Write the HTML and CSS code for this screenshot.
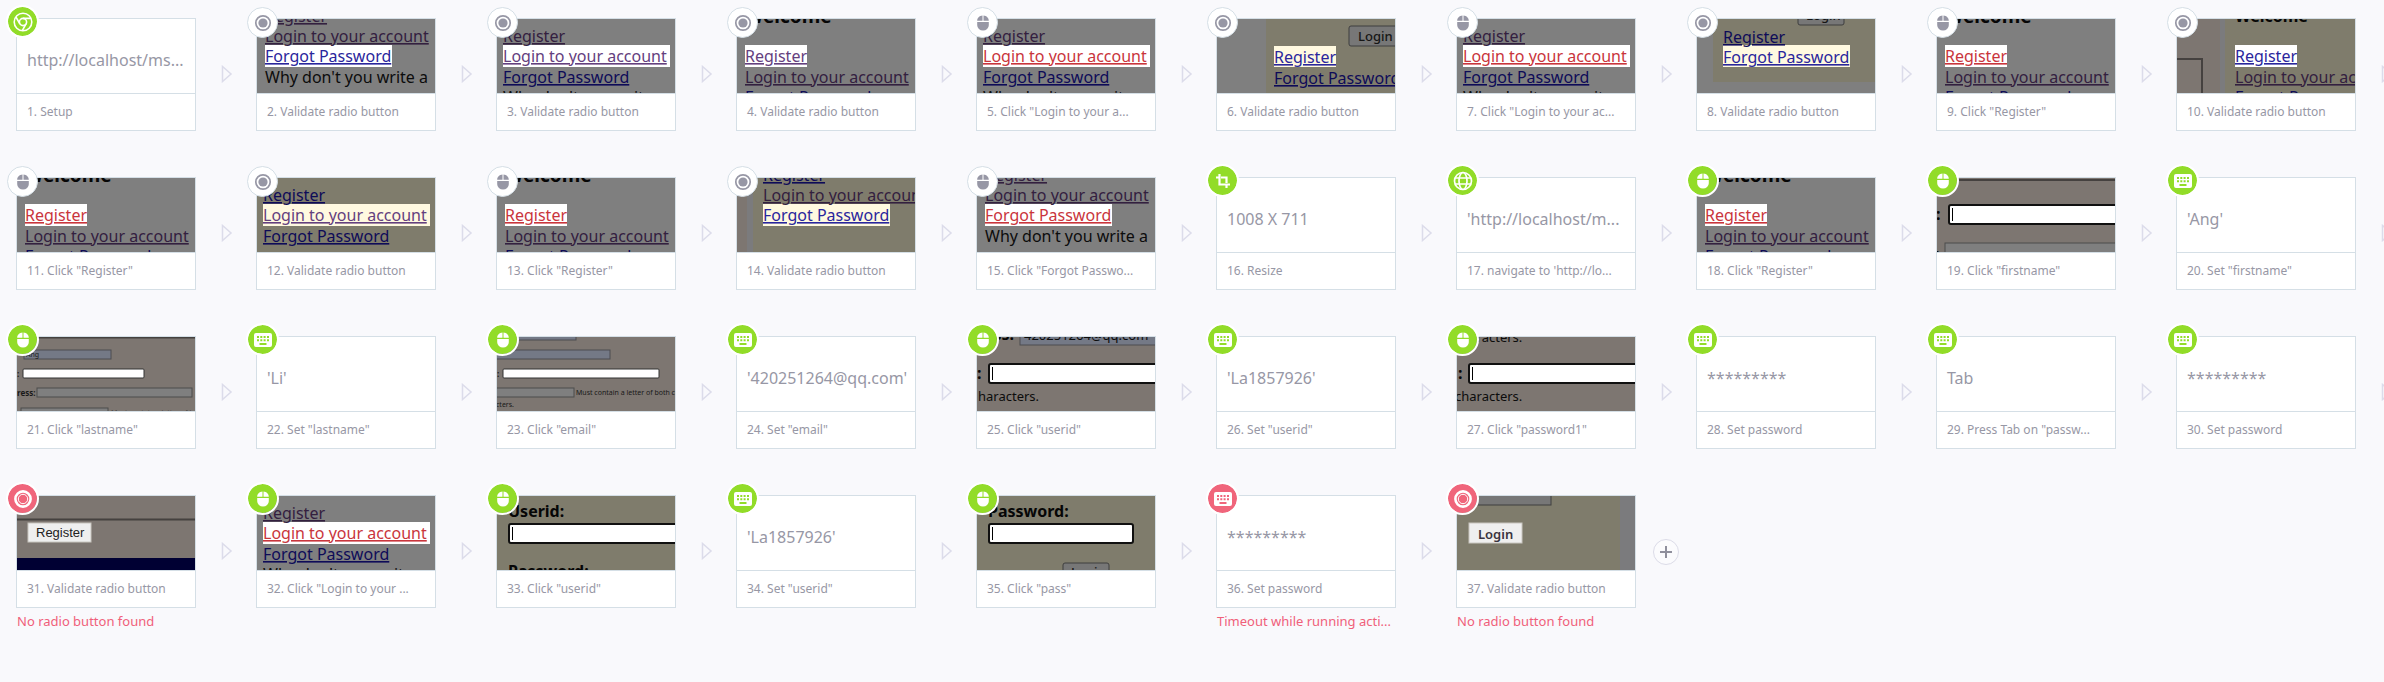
FILE: index.html
```html
<!DOCTYPE html>
<html lang="en">
<head>
<meta charset="utf-8">
<title>Test steps</title>
<link rel="stylesheet" href="styles.css">
</head>
<body>
<svg class="defs" aria-hidden="true">
  <symbol id="i-radio" viewBox="0 0 20 20"><circle cx="10" cy="10" r="7.2" fill="none" stroke="currentColor" stroke-width="1.7"/><circle cx="10" cy="10" r="4.6" fill="currentColor"/></symbol>
  <symbol id="i-ring" viewBox="0 0 20 20"><circle cx="10" cy="10" r="7.6" fill="none" stroke="currentColor" stroke-width="2.6"/><circle cx="10" cy="10" r="4.7" fill="none" stroke="currentColor" stroke-width="1"/></symbol>
  <symbol id="i-mouse" viewBox="0 0 20 20"><path fill="currentColor" d="M9.500 2.600v5.200H4.200C4.200 5 6.300 2.800 9.500 2.600zM10.500 2.600v5.200h5.300C15.800 5 13.700 2.800 10.500 2.600zM4.200 8.900h11.600v3.300a5.800 5.400 0 0 1-11.600 0z"/></symbol>
  <symbol id="i-key" viewBox="0 0 20 20"><path fill="currentColor" fill-rule="evenodd" d="M3 3h14a2 2 0 0 1 2 2v10a2 2 0 0 1-2 2H3a2 2 0 0 1-2-2V5a2 2 0 0 1 2-2zM4 6v2h2V6zM7.300 6v2h2V6zM10.600 6v2h2V6zM14 6v2h2V6zM4 9.200v2h2v-2zM7.300 9.200v2h2v-2zM10.600 9.200v2h2v-2zM14 9.200v2h2v-2zM6.500 13v2h7v-2z"/></symbol>
  <symbol id="i-crop" viewBox="0 0 20 20"><path fill="none" stroke="currentColor" stroke-width="2.200" d="M3 6.500h2.500M8 6.500h5.500V12M6.500 3v10.500H17M13.500 13v4"/></symbol>
  <symbol id="i-globe" viewBox="0 0 20 20"><g fill="none" stroke="currentColor" stroke-width="1.700"><circle cx="10" cy="10" r="8.500"/><ellipse cx="10" cy="10" rx="4" ry="8.500"/><path d="M2 7h16M2 13h16"/></g></symbol>
  <symbol id="i-chrome" viewBox="0 0 20 20"><g fill="none" stroke="currentColor" stroke-width="1.600"><circle cx="10" cy="10" r="8.800"/><circle cx="10" cy="10" r="3.600"/><path d="M10 6.400h7.900M6.900 11.800L2.900 5M13.100 11.800l-4 7"/></g></symbol>
</svg>
<main class="steps">

<article class="step"><div class="card"><div class="view value">http://localhost/ms...</div><p class="caption">1. Setup</p><span class="badge ok"><svg><use href="#i-chrome"/></svg></span></div><span class="arrow"><svg viewBox="0 0 12 18"><path d="M1.500 1.500v15l8.500-7.500z"/></svg></span></article>

<article class="step"><div class="card"><svg class="view grey" viewBox="0 0 178 74"><rect class="white" x="8" y="26" width="127" height="22"/><text class="link dim-p" x="8" y="3">Register</text><text class="link dim-p" x="8" y="23">Login to your account</text><text class="link blue" x="8" y="43">Forgot Password</text><text class="plain" x="8" y="64">Why don't you write a</text></svg><p class="caption">2. Validate radio button</p><span class="badge"><svg><use href="#i-radio"/></svg></span></div><span class="arrow"><svg viewBox="0 0 12 18"><path d="M1.500 1.500v15l8.500-7.500z"/></svg></span></article>

<article class="step"><div class="card"><svg class="view grey" viewBox="0 0 178 74"><rect class="white" x="6" y="26" width="167" height="22"/><text class="link dim-p" x="6" y="23">Register</text><text class="link purple" x="6" y="43">Login to your account</text><text class="link dim-b" x="6" y="64">Forgot Password</text><text class="plain" x="6" y="84">Why don't you write a</text></svg><p class="caption">3. Validate radio button</p><span class="badge"><svg><use href="#i-radio"/></svg></span></div><span class="arrow"><svg viewBox="0 0 12 18"><path d="M1.500 1.500v15l8.500-7.500z"/></svg></span></article>

<article class="step"><div class="card"><svg class="view grey" viewBox="0 0 178 74"><rect class="white" x="8" y="26" width="62" height="22"/><text class="title" x="8" y="4">Welcome</text><text class="link purple" x="8" y="43">Register</text><text class="link dim-p" x="8" y="64">Login to your account</text><text class="link dim-b" x="8" y="84">Forgot Password</text></svg><p class="caption">4. Validate radio button</p><span class="badge"><svg><use href="#i-radio"/></svg></span></div><span class="arrow"><svg viewBox="0 0 12 18"><path d="M1.500 1.500v15l8.500-7.500z"/></svg></span></article>

<article class="step"><div class="card"><svg class="view grey" viewBox="0 0 178 74"><rect class="white" x="6" y="26" width="167" height="22"/><text class="link dim-p" x="6" y="23">Register</text><text class="link red" x="6" y="43">Login to your account</text><text class="link dim-b" x="6" y="64">Forgot Password</text><text class="plain" x="6" y="84">Why don't you write a</text></svg><p class="caption">5. Click "Login to your a...</p><span class="badge"><svg><use href="#i-mouse"/></svg></span></div><span class="arrow"><svg viewBox="0 0 12 18"><path d="M1.500 1.500v15l8.500-7.500z"/></svg></span></article>

<article class="step"><div class="card"><svg class="view grey" viewBox="0 0 178 74"><rect class="olive-fill" x="49" y="0" width="129" height="74"/><rect class="dim-btn" x="132" y="7" width="60" height="20" rx="2"/><text class="btn-text" x="141" y="22">Login</text><rect class="cream" x="57" y="27" width="62" height="21"/><text class="link blue" x="57" y="44">Register</text><text class="link dim-b" x="57" y="65">Forgot Password</text></svg><p class="caption">6. Validate radio button</p><span class="badge"><svg><use href="#i-radio"/></svg></span></div><span class="arrow"><svg viewBox="0 0 12 18"><path d="M1.500 1.500v15l8.500-7.500z"/></svg></span></article>

<article class="step"><div class="card"><svg class="view grey" viewBox="0 0 178 74"><rect class="white" x="6" y="26" width="167" height="22"/><text class="link dim-p" x="6" y="23">Register</text><text class="link red" x="6" y="43">Login to your account</text><text class="link dim-b" x="6" y="64">Forgot Password</text><text class="plain" x="6" y="84">Why don't you write a</text></svg><p class="caption">7. Click "Login to your ac...</p><span class="badge"><svg><use href="#i-mouse"/></svg></span></div><span class="arrow"><svg viewBox="0 0 12 18"><path d="M1.500 1.500v15l8.500-7.500z"/></svg></span></article>

<article class="step"><div class="card"><svg class="view grey" viewBox="0 0 178 74"><rect class="olive-fill" x="16" y="0" width="162" height="63"/><rect class="dim-btn" x="101" y="-14" width="46" height="20" rx="2"/><text class="btn-text" x="109" y="1">Login</text><rect class="cream" x="26" y="26" width="127" height="22"/><text class="link dim-b" x="26" y="24">Register</text><text class="link blue" x="26" y="44">Forgot Password</text></svg><p class="caption">8. Validate radio button</p><span class="badge"><svg><use href="#i-radio"/></svg></span></div><span class="arrow"><svg viewBox="0 0 12 18"><path d="M1.500 1.500v15l8.500-7.500z"/></svg></span></article>

<article class="step"><div class="card"><svg class="view grey" viewBox="0 0 178 74"><rect class="white" x="8" y="26" width="62" height="22"/><text class="title" x="8" y="4">Welcome</text><text class="link red" x="8" y="43">Register</text><text class="link dim-p" x="8" y="64">Login to your account</text><text class="link dim-b" x="8" y="84">Forgot Password</text></svg><p class="caption">9. Click "Register"</p><span class="badge"><svg><use href="#i-mouse"/></svg></span></div><span class="arrow"><svg viewBox="0 0 12 18"><path d="M1.500 1.500v15l8.500-7.500z"/></svg></span></article>

<article class="step"><div class="card"><svg class="view brown" viewBox="0 0 178 74"><rect class="grey-fill" x="43" y="0" width="5" height="74"/><rect class="olive-fill" x="48" y="0" width="130" height="74"/><path class="rule" d="M0 40h25v34"/><text class="title small" x="58" y="3">Welcome</text><rect class="white" x="58" y="26" width="62" height="22"/><text class="link blue" x="58" y="43">Register</text><text class="link dim-p" x="58" y="64">Login to your account</text><text class="link dim-b" x="58" y="84">Forgot Password</text></svg><p class="caption">10. Validate radio button</p><span class="badge"><svg><use href="#i-radio"/></svg></span></div><span class="arrow"><svg viewBox="0 0 12 18"><path d="M1.500 1.500v15l8.500-7.500z"/></svg></span></article>

<article class="step"><div class="card"><svg class="view grey" viewBox="0 0 178 74"><rect class="white" x="8" y="26" width="62" height="22"/><text class="title" x="8" y="4">Welcome</text><text class="link red" x="8" y="43">Register</text><text class="link dim-p" x="8" y="64">Login to your account</text><text class="link dim-b" x="8" y="84">Forgot Password</text></svg><p class="caption">11. Click "Register"</p><span class="badge"><svg><use href="#i-mouse"/></svg></span></div><span class="arrow"><svg viewBox="0 0 12 18"><path d="M1.500 1.500v15l8.500-7.500z"/></svg></span></article>

<article class="step"><div class="card"><svg class="view olive" viewBox="0 0 178 74"><rect class="cream" x="6" y="26" width="167" height="22"/><text class="link dim-b" x="6" y="23">Register</text><text class="link purple" x="6" y="43">Login to your account</text><text class="link dim-b" x="6" y="64">Forgot Password</text></svg><p class="caption">12. Validate radio button</p><span class="badge"><svg><use href="#i-radio"/></svg></span></div><span class="arrow"><svg viewBox="0 0 12 18"><path d="M1.500 1.500v15l8.500-7.500z"/></svg></span></article>

<article class="step"><div class="card"><svg class="view grey" viewBox="0 0 178 74"><rect class="white" x="8" y="26" width="62" height="22"/><text class="title" x="8" y="4">Welcome</text><text class="link red" x="8" y="43">Register</text><text class="link dim-p" x="8" y="64">Login to your account</text><text class="link dim-b" x="8" y="84">Forgot Password</text></svg><p class="caption">13. Click "Register"</p><span class="badge"><svg><use href="#i-mouse"/></svg></span></div><span class="arrow"><svg viewBox="0 0 12 18"><path d="M1.500 1.500v15l8.500-7.500z"/></svg></span></article>

<article class="step"><div class="card"><svg class="view olive" viewBox="0 0 178 74"><rect class="brown-fill" x="0" y="0" width="10" height="74"/><rect class="grey-fill" x="10" y="0" width="6" height="74"/><rect class="cream" x="26" y="26" width="127" height="22"/><text class="link dim-b" x="26" y="3">Register</text><text class="link dim-p" x="26" y="23">Login to your account</text><text class="link blue" x="26" y="43">Forgot Password</text></svg><p class="caption">14. Validate radio button</p><span class="badge"><svg><use href="#i-radio"/></svg></span></div><span class="arrow"><svg viewBox="0 0 12 18"><path d="M1.500 1.500v15l8.500-7.500z"/></svg></span></article>

<article class="step"><div class="card"><svg class="view grey" viewBox="0 0 178 74"><rect class="white" x="8" y="26" width="127" height="22"/><text class="link dim-p" x="8" y="3">Register</text><text class="link dim-p" x="8" y="23">Login to your account</text><text class="link red" x="8" y="43">Forgot Password</text><text class="plain" x="8" y="64">Why don't you write a</text></svg><p class="caption">15. Click "Forgot Passwo...</p><span class="badge"><svg><use href="#i-mouse"/></svg></span></div><span class="arrow"><svg viewBox="0 0 12 18"><path d="M1.500 1.500v15l8.500-7.500z"/></svg></span></article>

<article class="step"><div class="card"><div class="view value">1008 X 711</div><p class="caption">16. Resize</p><span class="badge ok"><svg><use href="#i-crop"/></svg></span></div><span class="arrow"><svg viewBox="0 0 12 18"><path d="M1.500 1.500v15l8.500-7.500z"/></svg></span></article>

<article class="step"><div class="card"><div class="view value">'http://localhost/m...</div><p class="caption">17. navigate to 'http://lo...</p><span class="badge ok"><svg><use href="#i-globe"/></svg></span></div><span class="arrow"><svg viewBox="0 0 12 18"><path d="M1.500 1.500v15l8.500-7.500z"/></svg></span></article>

<article class="step"><div class="card"><svg class="view grey" viewBox="0 0 178 74"><rect class="white" x="8" y="26" width="62" height="22"/><text class="title" x="8" y="4">Welcome</text><text class="link red" x="8" y="43">Register</text><text class="link dim-p" x="8" y="64">Login to your account</text><text class="link dim-b" x="8" y="84">Forgot Password</text></svg><p class="caption">18. Click "Register"</p><span class="badge ok"><svg><use href="#i-mouse"/></svg></span></div><span class="arrow"><svg viewBox="0 0 12 18"><path d="M1.500 1.500v15l8.500-7.500z"/></svg></span></article>

<article class="step"><div class="card"><svg class="view brown" viewBox="0 0 178 74"><path class="rule" d="M0 2h178"/><text class="label" x="-1" y="42">:</text><rect class="field" x="12" y="27" width="200" height="19" rx="2"/><path class="caret" d="M15.500 30v13"/><rect class="dim-field" x="8" y="65" width="200" height="20"/><text class="label" x="-2" y="82">:</text></svg><p class="caption">19. Click "firstname"</p><span class="badge ok"><svg><use href="#i-mouse"/></svg></span></div><span class="arrow"><svg viewBox="0 0 12 18"><path d="M1.500 1.500v15l8.500-7.500z"/></svg></span></article>

<article class="step"><div class="card"><div class="view value">'Ang'</div><p class="caption">20. Set "firstname"</p><span class="badge ok"><svg><use href="#i-key"/></svg></span></div><span class="arrow"><svg viewBox="0 0 12 18"><path d="M1.500 1.500v15l8.500-7.500z"/></svg></span></article>

<article class="step"><div class="card"><svg class="view brown" viewBox="0 0 178 74"><path class="rule" d="M0 0.500h178"/><rect class="blue-field" x="7" y="13" width="87" height="9"/><text class="tiny" x="9" y="20">Ang</text><rect class="field thin" x="6" y="32" width="121" height="9" rx="1"/><text class="tiny bold" x="0" y="40">:</text><text class="tiny bold" x="0" y="59">ress:</text><rect class="dim-field" x="20" y="51" width="155" height="9"/><rect class="dim-field" x="4" y="71" width="87" height="9"/><text class="tiny faint" x="94" y="78">Must contain a letter of b</text></svg><p class="caption">21. Click "lastname"</p><span class="badge ok"><svg><use href="#i-mouse"/></svg></span></div><span class="arrow"><svg viewBox="0 0 12 18"><path d="M1.500 1.500v15l8.500-7.500z"/></svg></span></article>

<article class="step"><div class="card"><div class="view value">'Li'</div><p class="caption">22. Set "lastname"</p><span class="badge ok"><svg><use href="#i-key"/></svg></span></div><span class="arrow"><svg viewBox="0 0 12 18"><path d="M1.500 1.500v15l8.500-7.500z"/></svg></span></article>

<article class="step"><div class="card"><svg class="view brown" viewBox="0 0 178 74"><rect class="blue-field" x="-8" y="-6" width="87" height="9"/><rect class="blue-field" x="-8" y="13" width="121" height="9"/><text class="tiny bold" x="0" y="40">:</text><rect class="field thin" x="6" y="32" width="156" height="9" rx="1"/><rect class="dim-field" x="-8" y="51" width="85" height="9"/><text class="tiny" x="79" y="58">Must contain a letter of both ca</text><text class="tiny" x="-1" y="70">cters.</text></svg><p class="caption">23. Click "email"</p><span class="badge ok"><svg><use href="#i-mouse"/></svg></span></div><span class="arrow"><svg viewBox="0 0 12 18"><path d="M1.500 1.500v15l8.500-7.500z"/></svg></span></article>

<article class="step"><div class="card"><div class="view value">'420251264@qq.com'</div><p class="caption">24. Set "email"</p><span class="badge ok"><svg><use href="#i-key"/></svg></span></div><span class="arrow"><svg viewBox="0 0 12 18"><path d="M1.500 1.500v15l8.500-7.500z"/></svg></span></article>

<article class="step"><div class="card"><svg class="view brown" viewBox="0 0 178 74"><text class="label" x="0" y="3">ress:</text><rect class="blue-field" x="43" y="-12" width="200" height="20"/><text class="note" x="47" y="3">420251264@qq.com</text><text class="label" x="0" y="42">:</text><rect class="field" x="12" y="27" width="200" height="19" rx="2"/><path class="caret" d="M15.500 30v13"/><text class="note" x="1" y="64">haracters.</text></svg><p class="caption">25. Click "userid"</p><span class="badge ok"><svg><use href="#i-mouse"/></svg></span></div><span class="arrow"><svg viewBox="0 0 12 18"><path d="M1.500 1.500v15l8.500-7.500z"/></svg></span></article>

<article class="step"><div class="card"><div class="view value">'La1857926'</div><p class="caption">26. Set "userid"</p><span class="badge ok"><svg><use href="#i-key"/></svg></span></div><span class="arrow"><svg viewBox="0 0 12 18"><path d="M1.500 1.500v15l8.500-7.500z"/></svg></span></article>

<article class="step"><div class="card"><svg class="view brown" viewBox="0 0 178 74"><text class="note" x="-2" y="5">characters.</text><text class="label" x="1" y="42">:</text><rect class="field" x="12" y="27" width="200" height="19" rx="2"/><path class="caret" d="M15.500 30v13"/><text class="note" x="-2" y="64">characters.</text></svg><p class="caption">27. Click "password1"</p><span class="badge ok"><svg><use href="#i-mouse"/></svg></span></div><span class="arrow"><svg viewBox="0 0 12 18"><path d="M1.500 1.500v15l8.500-7.500z"/></svg></span></article>

<article class="step"><div class="card"><div class="view value">*********</div><p class="caption">28. Set password</p><span class="badge ok"><svg><use href="#i-key"/></svg></span></div><span class="arrow"><svg viewBox="0 0 12 18"><path d="M1.500 1.500v15l8.500-7.500z"/></svg></span></article>

<article class="step"><div class="card"><div class="view value">Tab</div><p class="caption">29. Press Tab on "passw...</p><span class="badge ok"><svg><use href="#i-key"/></svg></span></div><span class="arrow"><svg viewBox="0 0 12 18"><path d="M1.500 1.500v15l8.500-7.500z"/></svg></span></article>

<article class="step"><div class="card"><div class="view value">*********</div><p class="caption">30. Set password</p><span class="badge ok"><svg><use href="#i-key"/></svg></span></div><span class="arrow"><svg viewBox="0 0 12 18"><path d="M1.500 1.500v15l8.500-7.500z"/></svg></span></article>

<article class="step"><div class="card"><svg class="view brown" viewBox="0 0 178 74"><path class="rule" d="M0 23.500h178"/><rect class="navy" x="0" y="62" width="178" height="12"/><rect class="lit-btn" x="11" y="27" width="63" height="19"/><text class="arial" x="19" y="41">Register</text></svg><p class="caption">31. Validate radio button</p><span class="badge fail"><svg><use href="#i-ring"/></svg></span><p class="error">No radio button found</p></div><span class="arrow"><svg viewBox="0 0 12 18"><path d="M1.500 1.500v15l8.500-7.500z"/></svg></span></article>

<article class="step"><div class="card"><svg class="view grey" viewBox="0 0 178 74"><rect class="white" x="6" y="26" width="167" height="22"/><text class="link dim-p" x="6" y="23">Register</text><text class="link red" x="6" y="43">Login to your account</text><text class="link dim-b" x="6" y="64">Forgot Password</text><text class="plain" x="6" y="84">Why don't you write a</text></svg><p class="caption">32. Click "Login to your ...</p><span class="badge ok"><svg><use href="#i-mouse"/></svg></span></div><span class="arrow"><svg viewBox="0 0 12 18"><path d="M1.500 1.500v15l8.500-7.500z"/></svg></span></article>

<article class="step"><div class="card"><svg class="view olive" viewBox="0 0 178 74"><text class="label" x="11" y="21">Userid:</text><rect class="field" x="12" y="28" width="200" height="19" rx="2"/><path class="caret" d="M15.500 31v13"/><text class="label" x="11" y="81">Password:</text></svg><p class="caption">33. Click "userid"</p><span class="badge ok"><svg><use href="#i-mouse"/></svg></span></div><span class="arrow"><svg viewBox="0 0 12 18"><path d="M1.500 1.500v15l8.500-7.500z"/></svg></span></article>

<article class="step"><div class="card"><div class="view value">'La1857926'</div><p class="caption">34. Set "userid"</p><span class="badge ok"><svg><use href="#i-key"/></svg></span></div><span class="arrow"><svg viewBox="0 0 12 18"><path d="M1.500 1.500v15l8.500-7.500z"/></svg></span></article>

<article class="step"><div class="card"><svg class="view olive" viewBox="0 0 178 74"><text class="label" x="11" y="21">Password:</text><rect class="field" x="12" y="28" width="144" height="19" rx="2"/><path class="caret" d="M15.500 31v13"/><rect class="dim-btn" x="86" y="67" width="46" height="20" rx="2"/><text class="btn-text" x="94" y="81">Login</text></svg><p class="caption">35. Click "pass"</p><span class="badge ok"><svg><use href="#i-mouse"/></svg></span></div><span class="arrow"><svg viewBox="0 0 12 18"><path d="M1.500 1.500v15l8.500-7.500z"/></svg></span></article>

<article class="step"><div class="card"><div class="view value">*********</div><p class="caption">36. Set password</p><span class="badge fail"><svg><use href="#i-key"/></svg></span><p class="error">Timeout while running acti...</p></div><span class="arrow"><svg viewBox="0 0 12 18"><path d="M1.500 1.500v15l8.500-7.500z"/></svg></span></article>

<article class="step"><div class="card"><svg class="view olive" viewBox="0 0 178 74"><rect class="grey-fill" x="163" y="0" width="15" height="74"/><rect class="dim-btn" x="-8" y="-12" width="102" height="21"/><rect class="lit-btn" x="12" y="27" width="53" height="20"/><text class="btn-text lit" x="21" y="43">Login</text></svg><p class="caption">37. Validate radio button</p><span class="badge fail"><svg><use href="#i-ring"/></svg></span><p class="error">No radio button found</p></div><button class="add" type="button" aria-label="Add step"><svg viewBox="0 0 14 14"><path d="M7 1v12M1 7h12"/></svg></button></article>

</main>
</body>
</html>
```
FILE: styles.css
```css
* { box-sizing: border-box; }

body {
  margin: 0;
  background: #f9f9fc;
  color: #9797a5;
  font-family: "Noto Sans", "Open Sans", sans-serif;
  overflow-x: hidden;
}

p { margin: 0; }

.defs {
  position: absolute;
  width: 0;
  height: 0;
}

.steps {
  display: grid;
  grid-template-columns: repeat(auto-fill, 180px);
  gap: 46px 60px;
  padding: 18px 16px;
}

.step {
  display: flex;
  min-height: 113px;
}

.card {
  position: relative;
  flex: none;
  width: 180px;
}

.view {
  display: block;
  width: 180px;
  height: 76px;
  border: 1px solid #d5dfe6;
  background: #fff;
}

.value {
  display: flex;
  align-items: center;
  padding: 8px 10px 0;
  font-size: 16px;
  white-space: nowrap;
}

.caption {
  height: 37px;
  padding: 0 10px;
  border: 1px solid #d5dfe6;
  border-top: 0;
  background: #fff;
  font-size: 12px;
  line-height: 36px;
  white-space: nowrap;
}

.error {
  padding: 3px 0 0 1px;
  color: #f0607a;
  font-size: 13px;
  line-height: 20px;
  white-space: nowrap;
}

.badge {
  position: absolute;
  top: -11px;
  left: -9px;
  display: flex;
  align-items: center;
  justify-content: center;
  width: 31px;
  height: 31px;
  border: 1px solid #d5dfe6;
  border-radius: 50%;
  background: #fff;
}

.badge svg {
  width: 20px;
  height: 20px;
}

.badge.ok,
.badge.fail {
  top: -13px;
  left: -10px;
  width: 33px;
  height: 33px;
  border: 2px solid #fff;
  color: #fff;
  background-clip: padding-box;
}

.badge.ok { background-color: #92dc28; }
.badge.fail { background-color: #f0657b; }

.arrow {
  flex: none;
  width: 12px;
  height: 18px;
  margin: 47px 0 0 25px;
}

.arrow svg {
  display: block;
  width: 12px;
  height: 18px;
  fill: none;
  stroke: #dcdcea;
  stroke-width: 1.500;
}

.add {
  flex: none;
  display: flex;
  align-items: center;
  justify-content: center;
  width: 26px;
  height: 26px;
  margin: 44px 0 0 17px;
  padding: 0;
  border: 1px solid #dcdce8;
  border-radius: 50%;
  background: #fbfbfd;
}

.add svg {
  width: 14px;
  height: 14px;
  stroke: #8f8f9c;
  stroke-width: 2;
}

/* Thumbnails */
.grey { background: #7f7f7f; }
.olive { background: #7f7c6c; }
.brown { background: #7d7671; }
.grey-fill { fill: #7b7b7d; }
.olive-fill { fill: #7f7c6c; }
.brown-fill { fill: #7d7671; }
.white { fill: #fff; }
.cream { fill: #fff9e0; }
.navy { fill: #000033; }

.link, .plain { font-size: 16px; }
.link { text-decoration: underline; }
.plain { fill: #0c0c0c; }
.blue { fill: #2a269c; }
.purple { fill: #64407e; }
.red { fill: #c9353c; }
.dim-p { fill: #33203f; }
.dim-b { fill: #0e0b58; }

.title, .label {
  fill: #060606;
  font-size: 16px;
  font-weight: 700;
}
.title { font-size: 19px; }
.title.small { font-size: 16px; }

.note { fill: #0c0c0c; font-size: 13px; }
.tiny { fill: #191919; font-size: 7px; }
.tiny.bold { font-size: 8px; font-weight: 700; }
.tiny.faint { fill: #4a4644; }

.rule { fill: none; stroke: #45413f; stroke-width: 2; }
.field { fill: #fff; stroke: #101010; stroke-width: 2; }
.field.thin { stroke: #333; stroke-width: 1; }
.caret { stroke: #000; stroke-width: 1; }
.dim-field { fill: #7f7f7f; stroke: #4c4c4c; stroke-width: 1; }
.blue-field { fill: #747986; stroke: #4c4c50; stroke-width: 1; }
.dim-btn { fill: #777; stroke: #3f3f3f; stroke-width: 1; }
.lit-btn { fill: #efefef; stroke: #c9c6c0; stroke-width: 1; }
.btn-text { fill: #161616; font-size: 13px; font-weight: 500; }
.btn-text.lit { fill: #3a3440; font-weight: 600; }
.arial { fill: #222; font-family: "Liberation Sans", sans-serif; font-size: 13px; }
```
